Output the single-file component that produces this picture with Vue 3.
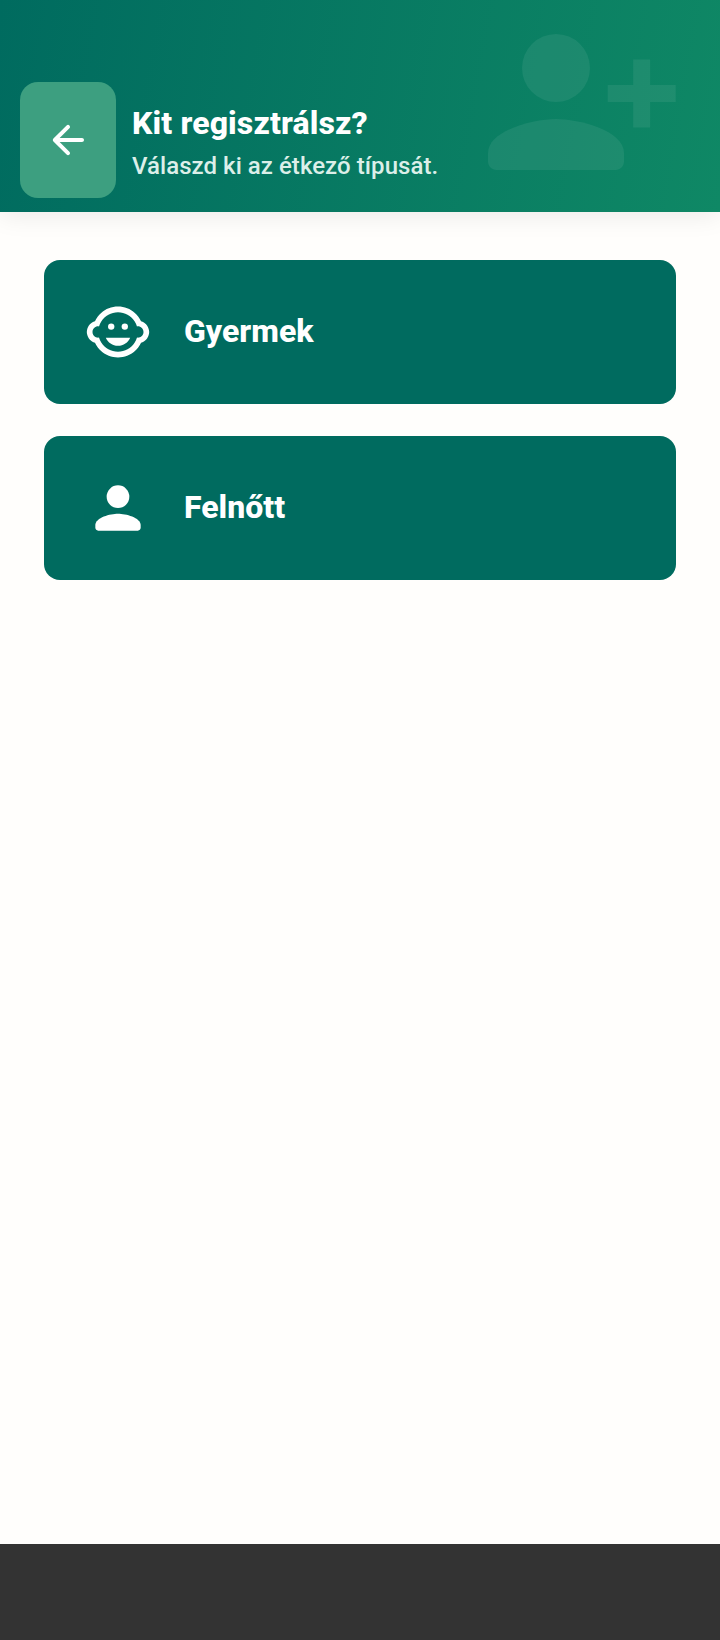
<template>
  <div class="page">
    <header class="header">
      <svg class="watermark" viewBox="0 0 24 24">
        <circle cx="12" cy="8" r="4" />
        <path d="M12 14c-2.67 0-8 1.34-8 4v1c0 .55.45 1 1 1h14c.55 0 1-.45 1-1v-1c0-2.66-5.33-4-8-4z" />
        <path d="M21.08 7h2v3h3v2h-3v3h-2v-3h-3v-2h3z" />
      </svg>
      <button class="back-btn" type="button">
        <svg viewBox="0 0 24 24" width="48" height="48">
          <path d="M19 11H7.83l4.88-4.88c.39-.39.39-1.03 0-1.42-.39-.39-1.02-.39-1.41 0l-6.59 6.59c-.39.39-.39 1.02 0 1.41l6.59 6.59c.39.39 1.02.39 1.41 0 .39-.39.39-1.02 0-1.41L7.83 13H19c.55 0 1-.45 1-1s-.45-1-1-1z" />
        </svg>
      </button>
      <div class="titles">
        <h1>Kit regisztrálsz?</h1>
        <p>Válaszd ki az étkező típusát.</p>
      </div>
    </header>

    <main class="content">
      <div v-for="item in options" :key="item.label" class="option">
        <svg viewBox="0 0 24 24" width="68" height="68">
          <circle v-for="c in item.circles" :key="c[0]" :cx="c[0]" :cy="c[1]" :r="c[2]" />
          <path v-for="d in item.paths" :key="d" :d="d" />
        </svg>
        <span>{{ item.label }}</span>
      </div>
    </main>

    <footer class="bottom-bar"></footer>
  </div>
</template>

<script setup>
const options = [
  {
    label: 'Gyermek',
    circles: [[14.4, 10.1, 1.12], [9.6, 10.1, 1.12]],
    paths: [
      'M7.7 14c.7 1.7 2.4 2.85 4.3 2.85s3.6-1.15 4.3-2.85h-8.6z',
      'M22.94 12.66c.04-.21.06-.43.06-.66s-.02-.45-.06-.66c-.25-1.51-1.36-2.74-2.81-3.17-.53-1.12-1.28-2.1-2.19-2.91C16.36 3.85 14.28 3 12 3s-4.36.85-5.94 2.26c-.92.81-1.67 1.8-2.19 2.91-1.45.43-2.56 1.65-2.81 3.17-.04.21-.06.43-.06.66s.02.45.06.66c.25 1.51 1.36 2.74 2.81 3.17.52 1.11 1.27 2.09 2.17 2.89C7.62 20.14 9.71 21 12 21s4.38-.86 5.97-2.28c.9-.8 1.65-1.79 2.17-2.89 1.44-.43 2.55-1.65 2.8-3.17zM19 14c-.1 0-.19-.02-.29-.03-.2.67-.49 1.29-.86 1.86C16.6 17.74 14.45 19 12 19s-4.6-1.26-5.85-3.17c-.37-.57-.66-1.19-.86-1.86-.1.01-.19.03-.29.03-1.1 0-2-.9-2-2s.9-2 2-2c.1 0 .19.02.29.03.2-.67.49-1.29.86-1.86C7.4 6.26 9.55 5 12 5s4.6 1.26 5.85 3.17c.37.57.66 1.19.86 1.86.1-.01.19-.03.29-.03 1.1 0 2 .9 2 2s-.9 2-2 2z'
    ]
  },
  {
    label: 'Felnőtt',
    circles: [[12, 8, 4]],
    paths: ['M12 14c-2.67 0-8 1.34-8 4v1c0 .55.45 1 1 1h14c.55 0 1-.45 1-1v-1c0-2.66-5.33-4-8-4z']
  }
]
</script>

<style>
html, body {
  margin: 0;
  background: #fffefc;
}
</style>

<style scoped>
.page {
  height: 1640px;
  display: flex;
  flex-direction: column;
  background: #fffefc;
  font-family: Roboto, sans-serif;
}

.header {
  position: relative;
  height: 212px;
  box-sizing: border-box;
  padding: 0 20px 14px;
  display: flex;
  align-items: flex-end;
  gap: 16px;
  background: linear-gradient(100deg, #006b5f, #0f8865);
  box-shadow: 0 4px 24px rgba(0, 0, 0, 0.08);
}

.watermark {
  position: absolute;
  left: 454px;
  top: 0;
  width: 204px;
  height: 204px;
  overflow: visible;
  fill: #ffffff;
  fill-opacity: 0.07;
}

.back-btn {
  width: 96px;
  height: 116px;
  flex: none;
  padding: 0;
  border: none;
  border-radius: 18px;
  background: #3d9f80;
  display: flex;
  align-items: center;
  justify-content: center;
}

.back-btn svg {
  fill: #fff;
}

.titles {
  padding-bottom: 16px;
}

.titles h1 {
  margin: 0;
  font-size: 32px;
  line-height: 40px;
  font-weight: 800;
  letter-spacing: 0.12px;
  color: #fff;
  position: relative;
  top: -1px;
}

.titles p {
  margin: 6px 0 0;
  font-size: 24px;
  line-height: 32px;
  font-weight: 500;
  letter-spacing: 0.05px;
  color: #dcefe9;
}

.content {
  flex: 1;
  padding: 48px 44px 0;
  display: flex;
  flex-direction: column;
  gap: 32px;
}

.option {
  height: 144px;
  box-sizing: border-box;
  padding: 0 40px;
  display: flex;
  align-items: center;
  gap: 32px;
  border-radius: 16px;
  background: #006b5f;
  color: #fff;
  font-size: 32px;
  font-weight: 800;
}

.option span {
  padding-bottom: 2px;
}

.option svg {
  fill: #fff;
  flex: none;
}

.bottom-bar {
  height: 96px;
  flex: none;
  background: #333333;
}
</style>
